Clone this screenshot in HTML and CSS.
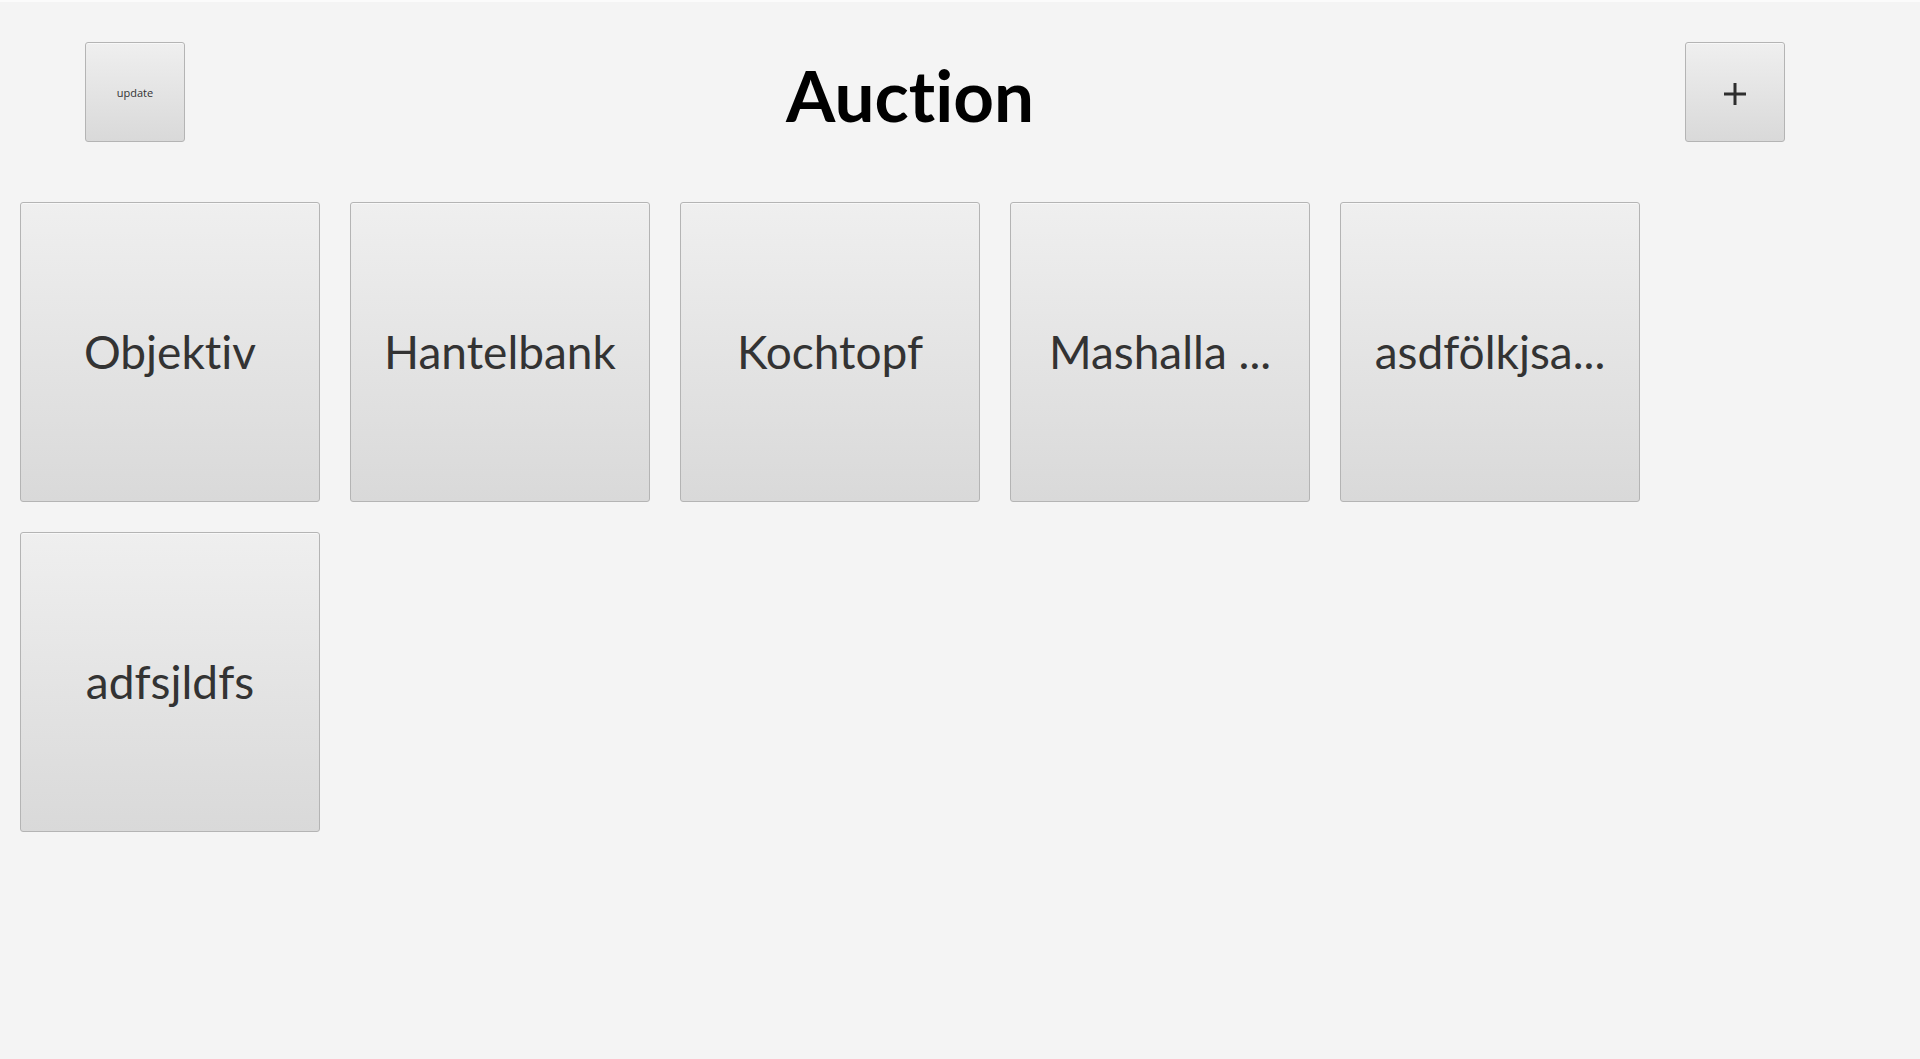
FILE: index.html
```html
<!DOCTYPE html>
<html lang="de">
<head>
<meta charset="utf-8">
<title>Auction</title>
<link rel="stylesheet" href="styles.css">
</head>
<body>
<div class="app">
  <header class="header">
    <button class="btn small-btn update-btn">update</button>
    <h1 class="title">Auction</h1>
    <button class="btn small-btn add-btn" aria-label="add">
      <svg width="22" height="22" viewBox="0 0 22 22"><path d="M0 11H22M11 0V22" stroke="#2e2e2e" stroke-width="3" fill="none"/></svg>
    </button>
  </header>
  <main class="grid">
    <button class="btn card">Objektiv</button>
    <button class="btn card">Hantelbank</button>
    <button class="btn card">Kochtopf</button>
    <button class="btn card">Mashalla ...</button>
    <button class="btn card">asdfölkjsa...</button>
    <button class="btn card">adfsjldfs</button>
  </main>
</div>
</body>
</html>
```
FILE: styles.css
```css
html, body {
  margin: 0;
  padding: 0;
  background: #f4f4f4;
}
.app {
  width: 1920px;
  height: 1059px;
  box-sizing: border-box;
  border-top: 2px solid #fbfbfb;
  font-family: Lato, "Open Sans", sans-serif;
  font-variant-ligatures: none;
}
.header {
  display: flex;
  align-items: center;
  padding: 40px 135px 0 85px;
  height: 100px;
}
.title {
  flex: 1;
  margin: 0;
  padding-right: 50px;
  text-align: center;
  font-family: Lato, sans-serif;
  font-weight: 700;
  font-size: 71px;
  color: #000;
  line-height: 100px;
  padding-top: 6px;
  font-variant-ligatures: none;
}
.btn {
  box-sizing: border-box;
  border: 1px solid #b4b4b4;
  border-radius: 3px;
  background: linear-gradient(to bottom, #efefef 0%, #d9d9d9 100%);
  box-shadow: inset 0 1px 0 rgba(255,255,255,0.55);
  color: #333;
  font-family: Lato, sans-serif;
  font-variant-ligatures: none;
  padding: 0;
  margin: 0;
  display: flex;
  align-items: center;
  justify-content: center;
}
.small-btn {
  width: 100px;
  height: 100px;
  flex: none;
}
.update-btn {
  font-size: 11px;
  font-family: "Open Sans", sans-serif;
}
.add-btn svg {
  display: block;
  margin-top: 3px;
}
.grid {
  display: flex;
  flex-wrap: wrap;
  gap: 30px;
  padding: 60px 0 0 20px;
  width: 1920px;
  box-sizing: border-box;
}
.card {
  width: 300px;
  height: 300px;
  font-size: 46px;
  font-weight: 400;
  color: #333;
  padding-bottom: 2px;
}
```
